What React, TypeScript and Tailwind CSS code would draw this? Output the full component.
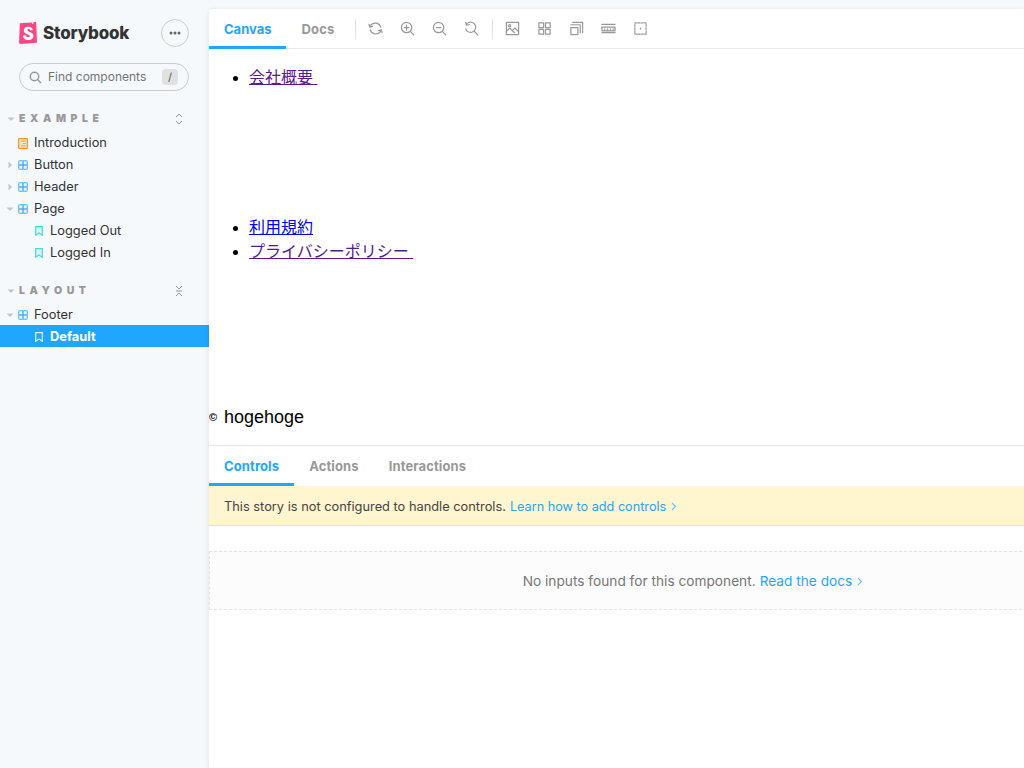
import React from "react";

const Caret = ({ open }: { open?: boolean }) => (
  <svg width="8" height="8" viewBox="0 0 8 8" className="shrink-0">
    {open ? <path d="M0.5 2.5h7L4 6z" fill="#c4c4c4" /> : <path d="M2.5 0.5v7L6 4z" fill="#c4c4c4" />}
  </svg>
);

const CompIcon = () => (
  <svg width="10" height="10" viewBox="0 0 10 10" className="shrink-0">
    <rect x="0.5" y="0.5" width="9" height="9" rx="1" fill="#a9dcfe" stroke="#6fc3f8" strokeWidth="1" />
    <rect x="1.800" y="1.800" width="2.500" height="2.500" fill="#e8f5fe" />
    <rect x="5.700" y="1.800" width="2.500" height="2.500" fill="#e8f5fe" />
    <rect x="1.800" y="5.700" width="2.500" height="2.500" fill="#e8f5fe" />
    <rect x="5.700" y="5.700" width="2.500" height="2.500" fill="#e8f5fe" />
    <path d="M5 1v8M1 5h8" stroke="#2fa3f3" strokeWidth="1" />
  </svg>
);

const DocIcon = () => (
  <svg width="10" height="11" viewBox="0 0 10 11" className="shrink-0">
    <rect x="0.600" y="0.600" width="8.800" height="9.800" rx="0.600" fill="#fde3c4" stroke="#f5953a" strokeWidth="1.200" />
    <path d="M3 3.200h4.500M5 5.500h2.500M3 7.800h4.500" stroke="#f5953a" strokeWidth="0.900" />
  </svg>
);

const StoryIcon = ({ white }: { white?: boolean }) => (
  <svg width="8" height="10" viewBox="0 0 8 10" className="ml-px shrink-0">
    <path
      d="M0.700 0.700h6.600v8.600L4 7 0.700 9.300z"
      fill={white ? "none" : "#d3f5f1"}
      stroke={white ? "#d8f0ff" : "#4adbd6"}
      strokeWidth="1.200"
    />
  </svg>
);

const Row = ({ indent, caret, icon, label, selected }: { indent: number; caret?: "open" | "closed"; icon: React.ReactNode; label: string; selected?: boolean }) => (
  <div className={selected ? "flex h-[22px] items-center bg-[#1ea7fd] pt-[2px] font-bold text-white" : "flex h-[22px] items-center pt-[2px] text-[#333333]"}>
    <div className={indent === 2 ? "w-[34px] shrink-0" : "flex w-[18px] shrink-0 justify-end pr-1"}>
      {caret && indent !== 2 ? <Caret open={caret === "open"} /> : null}
    </div>
    <div className="flex w-4 shrink-0 items-center">{icon}</div>
    <span className="text-[12.850px]">{label}</span>
  </div>
);

const SectionHead = ({ label, collapse }: { label: string; collapse?: boolean }) => (
  <div className="flex h-[22px] items-center pl-[7px] pr-[26px] pt-[2px]">
    <div className="w-3 shrink-0"><Caret open /></div>
    <span className="text-[10.500px] font-black uppercase tracking-[0.44em] text-[#999999]">{label}</span>
    <svg width="8" height="12" viewBox="0 0 8 12" className="ml-auto" fill="none" stroke="#999999" strokeWidth="1">
      {collapse ? <path d="M1 1l3 3 3-3M1 11l3-3 3 3M1 6h6" /> : <path d="M1 4l3-3 3 3M1 8l3 3 3-3" />}
    </svg>
  </div>
);

const Tool = ({ children }: { children: React.ReactNode }) => (
  <div className="flex h-10 w-8 items-center justify-center">
    <svg width="15" height="15" viewBox="0 0 16 16" fill="none" stroke="#999999" strokeWidth="1.300" strokeLinecap="round" strokeLinejoin="round">
      {children}
    </svg>
  </div>
);

const Tab = ({ label, active, tight }: { label: string; active?: boolean; tight?: boolean }) => (
  <div className={active ? "flex h-10 items-center border-b-[3px] border-[#1ea7fd] px-[15px] pt-[5px] text-[13px] font-bold text-[#1ea7fd]" : "flex h-10 items-center border-b-[3px] border-transparent px-[15px] pt-[5px] text-[13px] font-bold text-[#999999]"}>
    <span className={tight ? "-mr-px" : "tracking-[0.12px]"}>{label}</span>
  </div>
);

const Chevron = () => (
  <svg width="6" height="9" viewBox="0 0 6 9" fill="none" stroke="#6cc5fd" strokeWidth="1.200" className="ml-[5px] inline-block">
    <path d="M1 1l3.500 3.500L1 8" />
  </svg>
);

export default function App() {
  const cjk = { fontFamily: '"Liberation Sans","Noto Sans CJK JP",sans-serif' };
  return (
    <div className="flex h-[768px] w-[1024px] overflow-hidden bg-[#f6f9fc] font-['Inter',sans-serif]">
      <aside className="w-[209px] shrink-0">
        <div className="mt-[19px] flex h-[28px] items-center justify-between pl-[19px] pr-5">
          <div className="flex items-center">
            <svg width="18" height="22" viewBox="0 0 18 22" className="mr-[6px]">
              <path d="M0.800 1.200 13 0.400l.3 1.600.9-.1.1-1.600L17.200 0.100 18 20.800 1.600 22 0 21.200z" fill="#ff4785" />
              <path d="M14 8c-.3-.2-.8-3.300-4.700-3.300-2.700 0-4.500 1.500-4.500 3.700 0 4 6 3.500 6 5.500 0 .9-.8 1.300-1.800 1.300-1.400 0-2.200-.8-2.300-2.100l-2.700.6C4.100 16.500 6.500 18 9.600 18c2.900 0 4.800-1.600 4.800-4 0-4.300-6-3.800-6-5.700 0-.8.500-1.200 1.300-1.200 1 0 1.700.5 1.800 1.500z" fill="#fff" />
            </svg>
            <span className="mt-[2px] text-[17px] font-extrabold tracking-[-0.2px] text-[#333333]">Storybook</span>
          </div>
          <div className="flex h-7 w-7 items-center justify-center rounded-full border border-[#c9ced3]">
            <svg width="12" height="4" viewBox="0 0 12 4" fill="#666666">
              <circle cx="2" cy="2" r="1.500" />
              <circle cx="6" cy="2" r="1.500" />
              <circle cx="10" cy="2" r="1.500" />
            </svg>
          </div>
        </div>
        <div className="mx-[19px] mb-4 mt-4 flex h-7 w-[170px] items-center rounded-full border border-[#c9ced3] pl-[9px] pr-[4px]">
          <svg width="13" height="13" viewBox="0 0 13 13" fill="none" stroke="#999999" strokeWidth="1.500" className="mr-[6px]">
            <circle cx="5.500" cy="5.500" r="4.200" />
            <path d="M8.800 8.800 12 12" />
          </svg>
          <span className="text-[12px] text-[#757575]">Find components</span>
          <span className="ml-auto mr-[6px] flex h-4 w-4 items-center justify-center rounded-sm bg-[#dfe1e3] text-[11px] text-[#555555]">/</span>
        </div>
        <SectionHead label="Example" />
        <div className="mt-[2px]">
          <Row indent={1} icon={<DocIcon />} label="Introduction" />
          <Row indent={1} caret="closed" icon={<CompIcon />} label="Button" />
          <Row indent={1} caret="closed" icon={<CompIcon />} label="Header" />
          <Row indent={1} caret="open" icon={<CompIcon />} label="Page" />
          <Row indent={2} icon={<StoryIcon />} label="Logged Out" />
          <Row indent={2} icon={<StoryIcon />} label="Logged In" />
        </div>
        <div className="mt-4">
          <SectionHead label="Layout" collapse />
        </div>
        <div className="mt-[2px]">
          <Row indent={1} caret="open" icon={<CompIcon />} label="Footer" />
          <Row indent={2} icon={<StoryIcon white />} label="Default" selected />
        </div>
      </aside>

      <main className="mt-[9px] flex min-w-0 flex-1 flex-col overflow-hidden rounded-tl-[4px] bg-white shadow-[0_1px_5px_rgba(0,0,0,0.1)]">
        <div className="flex h-10 shrink-0 items-center border-b border-[#e6e6e6]">
          <Tab label="Canvas" active tight />
          <div className="ml-px">
            <Tab label="Docs" />
          </div>
          <div className="ml-[6px] mr-[3px] h-5 w-px bg-[#e0e0e0]" />
          <Tool>
            <path d="M13.500 6.500A6 6 0 0 0 3 4.500L1.800 6M2.500 9.500A6 6 0 0 0 13 11.500L14.200 10" />
            <path d="M1 3.500 1.800 6.500 4.800 5.800M15 12.500l-.8-3-3 .7" />
          </Tool>
          <Tool>
            <circle cx="7" cy="7" r="5.500" />
            <path d="M11 11l3.800 3.800M7 4.500v5M4.500 7h5" />
          </Tool>
          <Tool>
            <circle cx="7" cy="7" r="5.500" />
            <path d="M11 11l3.800 3.800M4.500 7h5" />
          </Tool>
          <Tool>
            <path d="M3 2.800A5.500 5.500 0 1 1 1.800 8.500M11 11l3.800 3.800M1.800 1.500 2.500 4.500 5.500 3.800" />
          </Tool>
          <div className="ml-[5px] mr-[3px] h-5 w-px bg-[#e0e0e0]" />
          <Tool>
            <rect x="1.500" y="1.500" width="13" height="13" />
            <path d="M1.500 11l3.500-3.500 5 5M8.500 9.500l2-2 4 4" />
            <circle cx="5" cy="5" r="1.200" />
          </Tool>
          <Tool>
            <rect x="2" y="2" width="5" height="5" />
            <rect x="9" y="2" width="5" height="5" />
            <rect x="2" y="9" width="5" height="5" />
            <rect x="9" y="9" width="5" height="5" />
          </Tool>
          <Tool>
            <path d="M4 1.500h10.500v11M2 4h10M2 7h7.500v7.500H2zM12 4v8.500" />
          </Tool>
          <Tool>
            <path d="M1 3.500h14M1 12.500h14M1 6.500h14v4H1zM4 10.500V8.500M7 10.500V8.500M10 10.500V8.500M13 10.500V8.500" />
          </Tool>
          <Tool>
            <path d="M2 2h12v12H2z" strokeDasharray="2 1.400" />
            <path d="M8 7.500v1" strokeWidth="1.400" />
          </Tool>
        </div>

        <div className="h-[396px] shrink-0 text-black" style={cjk}>
          <ul className="mt-[17px] list-disc pl-10 text-base leading-6">
            <li><span className="text-[#551a8b] underline">会社概要&nbsp;</span></li>
          </ul>
          <ul className="mt-[126px] list-disc pl-10 text-base leading-6">
            <li><span className="text-[#0000ee] underline">利用規約</span></li>
            <li><span className="text-[#551a8b] underline">プライバシーポリシー&nbsp;</span></li>
          </ul>
          <div className="mt-[141px] flex items-center">
            <span className="w-[15px] text-[11px] font-bold leading-6">©</span>
            <span className="text-[18px] leading-6">hogehoge</span>
          </div>
        </div>

        <div className="flex h-[41px] shrink-0 items-center border-t border-[#e6e6e6]">
          <Tab label="Controls" active />
          <Tab label="Actions" />
          <Tab label="Interactions" />
        </div>
        <div className="flex h-10 shrink-0 items-center border-b border-[#e9dfb5] bg-[#fff5cf] px-[15px] pt-[2px] text-[#444444]">
          <span className="text-[12.820px]">This story is not configured to handle controls.</span>
          <span className="ml-1 text-[12.680px] text-[#1ea7fd]">Learn how to add controls</span>
          <Chevron />
        </div>
        <div className="mt-[25px] flex h-[59px] w-[968px] shrink-0 items-center justify-center border border-dashed border-[#e3e3e3] bg-[#fcfcfc] pt-[2px] text-[13.700px] text-[#767676]">
          <span>No inputs found for this component.</span>
          <span className="ml-1 text-[#1ea7fd]">Read the docs</span>
          <Chevron />
        </div>
      </main>
    </div>
  );
}
